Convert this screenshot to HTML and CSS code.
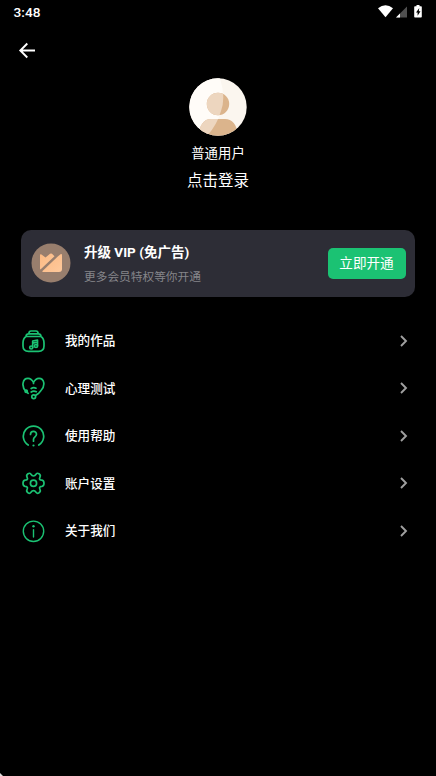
FILE: index.html
```html
<!DOCTYPE html>
<html lang="zh-CN">
<head>
<meta charset="utf-8">
<title>我的</title>
<link rel="stylesheet" href="styles.css">
</head>
<body>
<header class="status">
  <span class="clock">3:48</span>
  <svg class="status-icons" width="46" height="16" viewBox="0 0 46 16">
    <path fill="#fff" d="M0 4.2Q7.5-1.600 15 4.200L7.500 13.300z"/>
    <path fill="#505050" d="M29 2.500V13.500H18z"/>
    <path fill="#fff" d="M22 9.500V13.500H18z"/>
    <path fill="#fff" d="M38.500 1h3v1.200H43a.8.8 0 0 1 .8.8v9.700a.8.8 0 0 1-.8.8h-6a.8.8 0 0 1-.8-.8V3a.8.8 0 0 1 .8-.8h1.500z"/>
    <path fill="#000" d="M41.300 4L38 8.500h1.600v3.300L42.500 7.300h-1.700z"/>
  </svg>
</header>
<nav class="nav">
  <svg width="18" height="18" viewBox="0 0 18 18"><path d="M17 8.500H2.500M9.300 1.500L2.300 8.500l7 7" fill="none" stroke="#fff" stroke-width="1.900"/></svg>
</nav>
<section class="profile">
  <svg class="avatar" width="58" height="58" viewBox="0 0 58 58">
    <defs>
      <clipPath id="disc"><circle cx="29" cy="29" r="28.700"/></clipPath>
      <clipPath id="figure"><circle cx="29" cy="26" r="11.200"/><path d="M10 58C10 47 15 41 22 41H36C43 41 48 46 49 58z"/></clipPath>
    </defs>
    <g clip-path="url(#disc)">
      <path fill="#fbf6ef" d="M0 0h58v58H0z"/>
      <path fill="#fffcf8" d="M0 0H31Q37 20 32 33Q28 47 18 58H0z"/>
      <g clip-path="url(#figure)">
        <path fill="#dbb48c" d="M0 0h58v58H0z"/>
        <path fill="#edd6bf" d="M0 0H31Q37 20 32 33Q28 47 18 58H0z"/>
      </g>
    </g>
  </svg>
  <div class="level">普通用户</div>
  <div class="login">点击登录</div>
</section>
<section class="vip">
  <svg class="crown" width="40" height="40" viewBox="0 0 40 40">
    <defs><linearGradient id="gold" x1="0" y1="0" x2="1" y2="1"><stop offset="0" stop-color="#fbb982"/><stop offset="1" stop-color="#ffc99c"/></linearGradient></defs>
    <circle cx="20" cy="20" r="19.500" fill="#987e6d"/>
    <path fill="url(#gold)" d="M9 12.200Q9 10.500 10.500 11.500L14.500 14.600L19 10.800Q20 10 21 10.800L23.500 13.300L10.500 25.500L9.300 26.500Q9 26 9 25z"/>
    <path fill="url(#gold)" d="M29.500 11.300Q31 10.500 31 12.300V26Q31 29 28 29H13Q10.800 29 11.500 28L26.800 13.500z"/>
  </svg>
  <div class="vip-text">
    <div class="vip-title">升级 VIP (免广告)</div>
    <div class="vip-sub">更多会员特权等你开通</div>
  </div>
  <button class="open">立即开通</button>
</section>
<main class="menu">
  <a class="row">
    <svg class="icon" viewBox="0 0 24 24"><path d="M7.800 4.700Q8 2 10 2H15Q17 2 17.200 4.700M5 7.500Q5 4.800 7.500 4.800H17.500Q20 4.800 20 7.500M5 7.500H20Q23 9.500 23 14V17Q23 22.300 17.500 22.300H7.500Q2 22.300 2 17V14Q2 9.500 5 7.500z"/><path d="M11.700 18.500V12L16.500 11V16.700M11.700 14.200L16.500 13.200"/><circle cx="10.200" cy="18.500" r="1.500"/><circle cx="15" cy="17" r="1.500"/></svg>
    <span class="label">我的作品</span>
    <svg class="chevron" viewBox="0 0 8 12"><path d="M1 1l5 5-5 5"/></svg>
  </a>
  <a class="row">
    <svg class="icon" viewBox="0 0 24 24"><path d="M5 15.500C0 10.500 1.500 2.300 7 2.300Q10.500 2.300 12.500 6.500V7.500M12.500 6.500Q14.500 2.300 18 2.300C23.500 2.300 24.500 10 20 14.500L17.500 17.500M5 15.500L7.200 17.300M10.200 12.500Q12.500 11 15 12.200M10.200 16Q12.500 14.500 15.300 15.700M17 17.800L14.500 19.500"/><circle cx="5.200" cy="15.300" r="1.100"/><circle cx="12.700" cy="20.700" r="1.900"/></svg>
    <span class="label">心理测试</span>
    <svg class="chevron" viewBox="0 0 8 12"><path d="M1 1l5 5-5 5"/></svg>
  </a>
  <a class="row">
    <svg class="icon" viewBox="0 0 24 24"><path d="M7.200 21A10.200 10.200 0 1 1 17.800 21M9.500 10.500C9.500 6.300 15.500 6.300 15.500 10.300C15.500 12.700 12.500 12.900 12.500 15.200V17.200"/><circle class="dot" cx="12.500" cy="21.500" r="1.100"/></svg>
    <span class="label">使用帮助</span>
    <svg class="chevron" viewBox="0 0 8 12"><path d="M1 1l5 5-5 5"/></svg>
  </a>
  <a class="row">
    <svg class="icon" viewBox="0 0 24 24"><path d="M12.500 5Q14 5 15 3.300Q16 1.500 18 2.800Q20 4.200 19 6Q18 8 19 8.700Q19.500 9.200 21 9.200Q23 9.600 23 12.300Q23 15 21 15.400Q19.500 15.400 19 16Q18 16.800 19 18.600Q20 20.400 18 21.800Q16 23 15 21.200Q14 19.600 12.500 19.600Q11 19.600 10 21.200Q9 23 7 21.800Q5 20.400 6 18.600Q7 16.800 6 16Q5.500 15.400 4 15.400Q2 15 2 12.300Q2 9.600 4 9.200Q5.500 9.200 6 8.700Q7 8 6 6Q5 4.200 7 2.800Q9 1.500 10 3.300Q11 5 12.500 5z"/><circle cx="12.500" cy="12.300" r="3.100"/></svg>
    <span class="label">账户设置</span>
    <svg class="chevron" viewBox="0 0 8 12"><path d="M1 1l5 5-5 5"/></svg>
  </a>
  <a class="row">
    <svg class="icon thin" viewBox="0 0 24 24"><circle cx="12.500" cy="12.300" r="10.200"/><path d="M12.500 10.800V18"/><circle class="dot" cx="12.500" cy="7.300" r="1.200"/></svg>
    <span class="label">关于我们</span>
    <svg class="chevron" viewBox="0 0 8 12"><path d="M1 1l5 5-5 5"/></svg>
  </a>
</main>
<div class="corner"></div>
</body>
</html>
```

FILE: styles.css
```css
* { box-sizing: border-box; }
body {
  position: relative;
  margin: 0;
  height: 776px;
  overflow: hidden;
  background: #000;
  color: #fff;
  font-family: Roboto, "Noto Sans CJK SC", sans-serif;
}
svg { display: block; flex: none; }
.status {
  height: 26px;
  display: flex;
  justify-content: space-between;
  padding: 4px 12px 0 13.5px;
}
.clock { font-size: 13.7px; line-height: 17px; font-weight: 500; }
.nav { height: 52px; padding: 16px 0 0 18px; }
.profile {
  height: 151.5px;
  display: flex;
  flex-direction: column;
  align-items: center;
}
.level { margin-top: 8px; font-size: 13.4px; line-height: 20px; }
.login { margin-top: 5px; font-size: 15.5px; line-height: 24px; }
.vip {
  height: 67.5px;
  margin: 0 21px;
  padding: 0 9.5px 0 9.5px;
  display: flex;
  align-items: center;
  border-radius: 10px;
  background: #2d2d36;
}
.vip-text { flex: 1; margin-left: 13.5px; padding-top: 2px; }
.vip-title { font-size: 13.5px; line-height: 20px; font-weight: 700; }
.vip-sub { margin-top: 6px; font-size: 11.7px; line-height: 18px; color: #85858a; }
.open {
  width: 78px;
  height: 31px;
  padding: 0;
  border: 0;
  border-radius: 5px;
  background: #1bc273;
  color: #fff;
  font-family: inherit;
  font-size: 13.6px;
  line-height: 31px;
}
.menu { margin-top: 20px; }
.row {
  height: 47.5px;
  padding: 0 28.5px 0 21px;
  display: flex;
  align-items: center;
}
.icon {
  width: 24px;
  height: 24px;
  fill: none;
  stroke: #1bc273;
  stroke-width: 1.7;
  stroke-linecap: round;
  stroke-linejoin: round;
}
.thin { stroke-width: 1.4; }
.dot { fill: #1bc273; stroke: none; }
.label { flex: 1; margin-left: 20px; padding-top: 1px; font-size: 12.6px; line-height: 20px; font-weight: 500; }
.chevron {
  width: 8px;
  height: 12px;
  fill: none;
  stroke: #a0a0a0;
  stroke-width: 1.9;
}
.corner {
  position: absolute;
  left: 0;
  bottom: 0;
  width: 3px;
  height: 3px;
  background: linear-gradient(45deg, #ddd 35%, #000 65%);
}
```
